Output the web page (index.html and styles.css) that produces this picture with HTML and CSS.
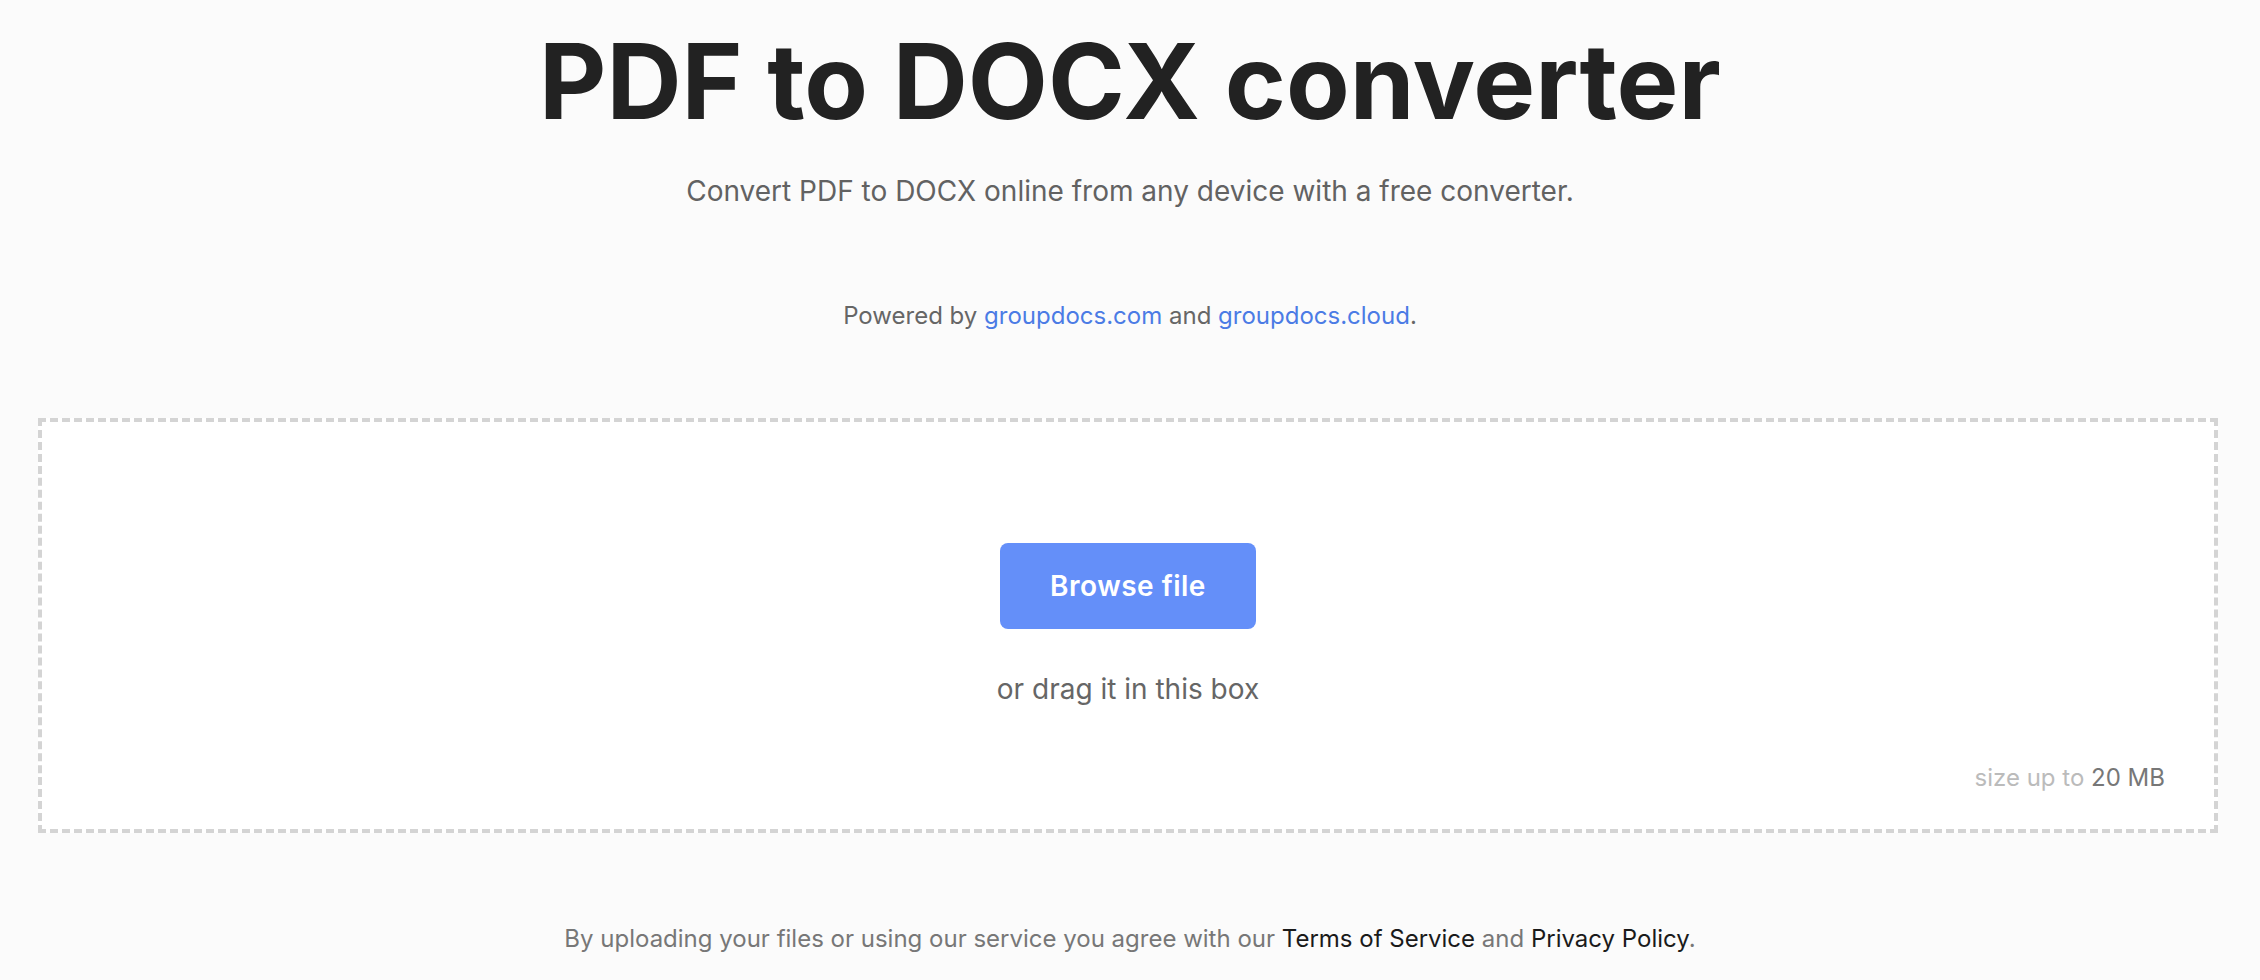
FILE: index.html
```html
<!DOCTYPE html>
<html lang="en">
<head>
<meta charset="utf-8">
<title>PDF to DOCX converter</title>
<link rel="stylesheet" href="styles.css">
</head>
<body>
<header class="hero">
  <h1 class="title">PDF to DOCX converter</h1>
  <p class="subtitle">Convert PDF to DOCX online from any device with a free converter.</p>
  <p class="powered">Powered by <a href="#">groupdocs.com</a> and <a href="#">groupdocs.cloud</a>.</p>
</header>
<main class="dropzone">
  <button class="browse" type="button">Browse file</button>
  <p class="drag">or drag it in this box</p>
  <p class="limit">size up to <span class="limit-value">20 MB</span></p>
</main>
<footer class="terms">
  By uploading your files or using our service you agree with our <a href="#">Terms of Service</a> and <a href="#">Privacy Policy</a>.
</footer>
</body>
</html>
```
FILE: styles.css
```css
html, body {
  margin: 0;
  padding: 0;
}
body {
  background: #fbfbfb;
  font-family: Inter, "Noto Sans", sans-serif;
  color: #222;
}
.hero {
  display: flex;
  flex-direction: column;
  align-items: center;
  padding-top: 18px;
}
.title {
  margin: 0;
  font-size: 104px;
  font-weight: 700;
  line-height: 126px;
  color: #222;
}
.subtitle {
  margin: 30px 0 0;
  font-size: 28px;
  line-height: 34px;
  color: #626262;
}
.powered {
  margin: 93px 0 0;
  font-size: 24px;
  line-height: 29px;
  color: #666;
}
.powered a {
  color: #4b7be5;
  text-decoration: none;
}
.dropzone {
  margin: 88px 42px 0 38px;
  border: 4px dashed #d4d4d4;
  background: #fff;
  display: flex;
  flex-direction: column;
  align-items: center;
  padding: 121px 49px 37px;
}
.browse {
  width: 256px;
  height: 86px;
  border: none;
  border-radius: 8px;
  background: #648ff9;
  color: #fff;
  font-family: Inter, "Noto Sans", sans-serif;
  font-size: 28px;
  font-weight: 600;
  letter-spacing: 0.5px;
}
.drag {
  margin: 43px 0 0;
  font-size: 28px;
  line-height: 34px;
  color: #666;
}
.limit {
  align-self: flex-end;
  margin: 57px 0 0;
  font-size: 24px;
  line-height: 29px;
  color: #bbb;
}
.limit-value {
  color: #777;
}
.terms {
  margin-top: 91px;
  text-align: center;
  font-size: 24px;
  line-height: 29px;
  color: #777;
}
.terms a {
  color: #1a1a1a;
  text-decoration: none;
}
```
